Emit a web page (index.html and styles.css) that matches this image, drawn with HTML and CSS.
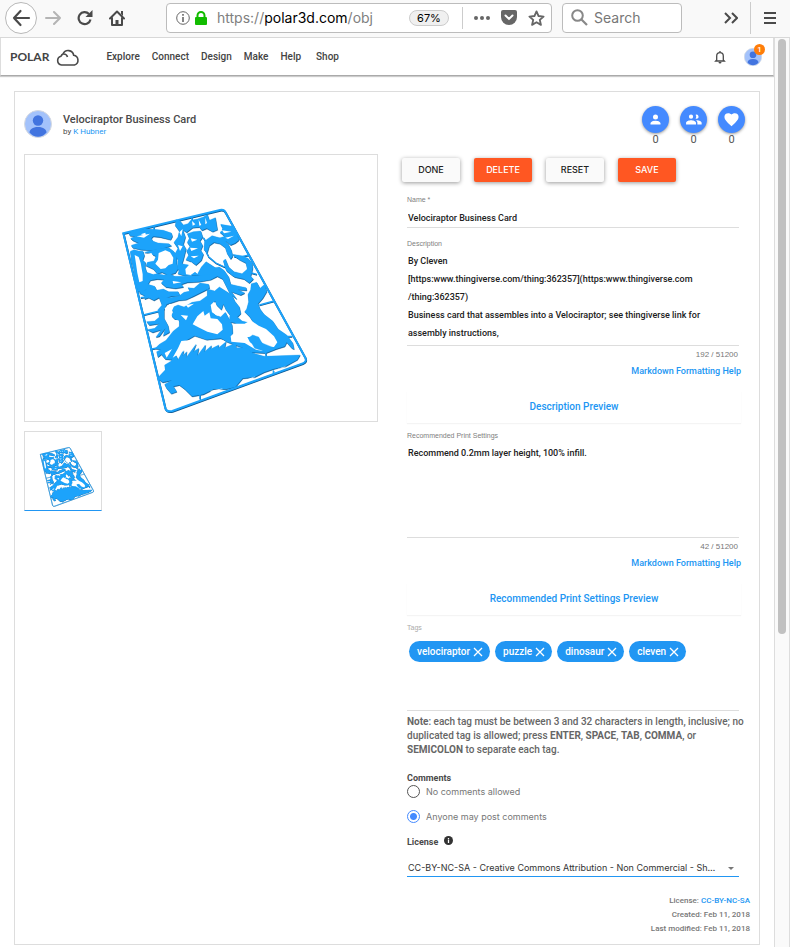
FILE: index.html
```html
<!DOCTYPE html>
<html lang="en">
<head>
<meta charset="utf-8">
<title>Velociraptor Business Card</title>
<link rel="stylesheet" href="styles.css">
</head>
<body>
<svg width="0" height="0" class="defs" aria-hidden="true">
  <symbol id="person" viewBox="0 0 24 24"><path d="M12 12a4 4 0 1 0 0-8 4 4 0 0 0 0 8zm0 2c-2.700 0-8 1.300-8 4v2h16v-2c0-2.700-5.300-4-8-4z"/></symbol>
  <symbol id="avatar" viewBox="0 0 28 28"><circle cx="14" cy="14" r="13.500" fill="#a3c2fb" stroke="#d5d9e0"/><circle cx="14" cy="10.500" r="5.200" fill="#4274df"/><path d="M5.500 22.500c0-3 3-5.500 8.500-5.500s8.500 2.500 8.500 5.500c-4.500 5.600-12.500 5.600-17 0z" fill="#4274df"/></symbol>
  <g id="outline">
    <path class="rail" d="M40 115 330 45q12-3 17 8l239 435q5 12-8 17L187 648q-17 4-21-8L40 115z"/>
    <path class="sprue" d="M132 92v16M246 66v20M336 104l24-5M100 360l48-12M92 308l40-6M125 462l20-4M448 330l44-12M380 188l38-8M146 550l42-22M270 596v16M420 232l20 6M520 424l26 0M466 470l4 20M490 526v12"/>
    <path d="M56 114 76 106 104 102 132 103 160 106 184 114 187 124 182 134 150 126 130 124 124 130 128 138 144 144 176 146 184 152 160 160 128 166 92 164 68 158 64 151 86 144 68 136 62 130 76 124 60 122z"/>
    <path d="M61 169 72 164 86 168 99 169 103 182 98 196 106 202 105 216 110 232 128 238 122 254 115 266 117 278 106 286 96 294 84 288 76 260 72 226 64 196z"/>
    <path d="M104 172 126 166 150 160 176 158 190 168 200 180 200 206 204 222 196 234 174 240 156 232 142 236 130 222 108 212 112 202 132 198 138 184 118 174z"/>
    <path d="M198 74 210 78 220 90 234 86 242 76 262 72 280 66 292 58 298 76 316 68 320 92 322 104 308 110 290 100 276 106 268 96 248 98 230 112 218 104 226 126 220 148 228 162 222 186 214 214 210 230 202 220 204 194 194 178 204 160 192 142 204 126 208 108 196 92z"/>
    <path d="M232 116 250 110 272 108 278 126 270 138 278 152 272 166 280 178 274 196 258 210 244 200 228 194 236 180 230 168 240 154 232 142 238 130z"/>
    <path d="M332 88 368 94 380 112 386 136 376 144 362 150 350 140 338 142 326 130 344 124 330 112 340 104z"/>
    <path class="bone" d="M280 128 290 144 286 164 294 182M294 184 318 204 344 216M372 184 404 190 420 210 408 234M343 196 348 220 368 240 406 246 424 254"/>
    <path d="M284 138 306 122 334 130 354 146 364 166 368 184 362 192 352 176 346 158 330 146 312 142 298 152 292 172 282 164z"/>
    <path d="M368 178 394 182 414 190 426 204 428 220 422 244 430 252 418 264 402 252 374 246 350 228 340 198 346 192 356 216 372 230 396 236 412 222 408 204 388 194z"/>
    <path d="M112 242 140 236 162 240 180 236 194 244 230 244 264 242 292 232 314 218 328 216 342 226 356 246 362 268 380 272 408 278 410 286 384 284 404 294 392 300 364 290 380 312 360 296 350 276 338 252 322 244 302 254 268 260 232 262 214 268 220 276 196 280 168 276 154 264 162 254 142 252 120 256z"/>
    <path d="M214 206 236 210 248 224 262 238 274 216 288 200 316 218 308 236 280 240 224 242 204 236z"/>
    <path d="M88 294 108 284 114 268 134 274 140 286 160 282 176 290 204 290 210 302 184 304 166 310 150 306 132 316 116 308 104 312 104 302z"/>
    <path d="M146 304 178 308 206 304 222 292 240 288 234 278 252 280 270 264 296 268 298 280 274 292 250 304 228 314 206 316 170 328 162 346 162 370 174 392 178 412 160 422 166 400 148 424 138 426 154 404 128 412 112 404 134 400 148 386 118 390 110 380 134 378 148 366 144 344 156 330z"/>
    <path d="M180 340 204 330 222 336 246 322 270 318 292 302 292 282 314 288 328 276 350 290 366 300 374 318 388 336 392 356 382 366 396 378 420 384 414 394 396 386 390 398 376 384 358 380 360 360 348 344 340 326 334 344 320 330 316 318 306 326 304 344 316 360 332 366 346 352 356 370 366 390 368 418 358 440 332 430 290 434 254 422 226 438 214 444 204 468 184 494 166 492 154 478 144 486 140 470 152 464 136 460 148 448 168 436 190 408 208 394 208 378 194 372 184 362 190 350z"/>
    <path d="M424 266 440 262 450 280 464 268 470 290 458 310 444 326 450 342 462 358 488 378 504 402 530 420 548 444 552 462 546 460 530 442 524 454 498 462 468 474 424 472 398 458 370 448 350 440 334 428 390 432 386 420 402 416 388 404 390 390 376 374 396 380 420 386 440 398 420 366 404 350 410 342 416 320 414 298 422 284z"/>
    <path d="M142 550 166 524 164 510 184 498 192 468 204 494 222 462 218 482 230 470 228 488 258 448 250 470 266 460 262 482 286 450 284 470 304 452 302 462 326 450 324 460 348 440 344 458 378 444 378 458 410 458 428 474 462 484 570 480 562 494 526 514 490 522 462 532 434 546 398 550 376 576 350 582 312 582 280 598 246 604 224 582 208 570 190 574 200 590 184 596 170 580 164 568 186 556 158 562z"/>
    <g class="gap">
      <path d="M74 180 86 186 92 204 98 238 98 258 88 262 82 234 78 206z"/>
      <path d="M146 174 166 166 180 172 190 188 188 206 176 210 166 220 152 222 136 206 144 194z"/>
      <path d="M108 178 124 174 130 184 120 196 104 194zM92 118l14-5 2 10zM132 130l14 2 6 4 14-1 8 5-18 2-22-4z"/>
      <path d="M80 124l40-8-18 12zM208 112l10-10-4 22zM204 150l14 4-8 14zM242 130l20 4-16 6zM240 158l24 2-20 8zM242 184l24-2-14 8zM246 78l10 10-8 4zM266 74l8 16-6 2zM286 68l5 16-5 4zM336 106l28 4-22 5zM346 128l26-6-18 10z"/>
      <path d="M226 222 244 202 262 226 242 240 228 238zM188 258l26 4-24 4z"/>
      <path d="M164 340 180 326 192 334 184 352 186 374 206 376 204 390 186 396 176 372z"/>
      <path d="M248 388 262 364 280 348 284 362 298 352 302 370 322 372 336 388 338 404 322 418 292 410 268 398z"/>
      <path d="M302 330 312 320 322 338 334 352 322 362 306 352zM212 360l22 2-6 14zM228 330l24-4-18 12z"/>
      <path d="M374 386 404 386 422 376 446 392 468 402 492 424 502 442 492 456 470 458 448 434 430 426 412 426 420 442 438 454 454 456 458 468 438 464 404 444 364 440 362 424 376 410z"/>
      <path d="M214 438 250 434 290 438 316 440 290 448 256 444 214 472 188 488 204 460zM164 474l22-12-16 26z"/>
      <path d="M392 560 436 544 416 556zM484 528 530 512 518 518zM300 588 340 580 310 592z"/>
    </g>
    <path d="M416 428 428 420 446 426 456 444 476 452 492 458 468 470 434 460z"/>
  </g>
  <symbol id="model" viewBox="0 0 630 675" overflow="visible">
    <use href="#outline" class="model-edge" x="1" y="2"/>
    <use href="#outline" class="model-face"/>
  </symbol>
</svg>

<div class="window">
  <header class="browser">
    <button class="tool back" aria-label="Back"><svg viewBox="0 0 32 32" width="32" height="32"><circle cx="16" cy="16" r="15.500" fill="#fff" stroke="#b8b8b8"/><path d="M24 16H9m6.500-7L9 16l6.500 7" fill="none" stroke="#4a4a4a" stroke-width="2.200" stroke-linecap="round" stroke-linejoin="round"/></svg></button>
    <button class="tool" aria-label="Forward"><svg viewBox="0 0 16 16" width="16" height="16"><path d="M1 8h14M9 2l6 6-6 6" fill="none" stroke="#b4b4b4" stroke-width="2" stroke-linecap="round" stroke-linejoin="round"/></svg></button>
    <button class="tool" aria-label="Reload"><svg viewBox="0 0 16 16" width="16" height="16"><path d="M13.500 9.500A6 6 0 1 1 12 4" fill="none" stroke="#4a4a4a" stroke-width="2.200"/><path d="M15.500 0v7h-7z" fill="#4a4a4a"/></svg></button>
    <button class="tool" aria-label="Home"><svg viewBox="0 0 16 16" width="16" height="16"><path d="M1 8.500 8 1.500l7 7M3 8v7h10V8" fill="none" stroke="#4a4a4a" stroke-width="2" stroke-linecap="round" stroke-linejoin="round"/><path d="M6.500 15v-5h3v5zM12 1h2v5l-2-2z" fill="#4a4a4a"/></svg></button>
    <div class="urlbar">
      <svg viewBox="0 0 14 14" width="14" height="14"><circle cx="7" cy="7" r="6.300" fill="none" stroke="#666"/><path d="M6.200 6h1.600v5H6.200zM6.200 3h1.600v1.700H6.200z" fill="#666"/></svg>
      <svg viewBox="0 0 12 14" width="12" height="14"><path d="M2.500 7V4.500a3.500 3.500 0 0 1 7 0V7" fill="none" stroke="#12bc00" stroke-width="2"/><rect y="6" width="12" height="8" rx="1" fill="#12bc00"/></svg>
      <div class="url" role="textbox" contenteditable="true" spellcheck="false" aria-label="Address">https://<b>polar3d.com</b>/obj</div>
      <button class="zoom">67%</button>
      <span class="rule"></span>
      <button class="tool" aria-label="Page actions"><svg viewBox="0 0 16 4" width="16" height="4" fill="#666"><circle cx="2" cy="2" r="2"/><circle cx="8" cy="2" r="2"/><circle cx="14" cy="2" r="2"/></svg></button>
      <button class="tool" aria-label="Pocket"><svg viewBox="0 0 16 15" width="16" height="15"><path d="M2 0h12a2 2 0 0 1 2 2v5a8 8 0 0 1-16 0V2a2 2 0 0 1 2-2z" fill="#666"/><path d="m4.500 5.500 3.500 3.400 3.500-3.400" fill="none" stroke="#fff" stroke-width="2" stroke-linecap="round"/></svg></button>
      <button class="tool" aria-label="Bookmark"><svg viewBox="0 0 18 17" width="17" height="16"><path d="m9 1.500 2.200 4.900 5.300.6-4 3.500 1.200 5.300L9 13l-4.700 2.800 1.200-5.300-4-3.500 5.300-.6z" fill="none" stroke="#666" stroke-width="2" stroke-linejoin="round"/></svg></button>
    </div>
    <label class="search">
      <svg viewBox="0 0 17 17" width="17" height="17"><circle cx="6.500" cy="6.500" r="5.300" fill="none" stroke="#888" stroke-width="2"/><path d="m10.500 10.500 5.500 5.500" stroke="#888" stroke-width="2.200"/></svg>
      <input type="search" placeholder="Search" aria-label="Search">
    </label>
    <button class="tool more" aria-label="More tools"><svg viewBox="0 0 14 12" width="14" height="12"><path d="m1 1 5 5-5 5M8 1l5 5-5 5" fill="none" stroke="#4a4a4a" stroke-width="2"/></svg></button>
    <span class="rule tall"></span>
    <button class="tool" aria-label="Menu"><svg viewBox="0 0 12 12" width="12" height="12"><path d="M0 1h12M0 6h12M0 11h12" stroke="#4a4a4a" stroke-width="2"/></svg></button>
  </header>

  <div class="viewport">
    <div class="page">
      <nav class="sitebar">
        <a href="#" class="logo"><span>POLAR</span><svg viewBox="0 0 24 18" width="24" height="18"><path d="M5.500 17A4.500 4.500 0 0 1 5 8.200 4.600 4.600 0 0 1 7 6a5.600 5.600 0 0 1 10.700 1.300A5 5 0 0 1 18.500 17zM7 6q3.500-.5 4.500 3" fill="none" stroke="#4a4a4a" stroke-width="1.600"/></svg></a>
        <a href="#">Explore</a><a href="#">Connect</a><a href="#">Design</a><a href="#">Make</a><a href="#">Help</a><a href="#" class="shop">Shop</a>
        <button class="tool bell" aria-label="Notifications"><svg viewBox="0 0 12 14" width="12" height="14"><path d="M2.700 10V6a3.300 3.300 0 0 1 6.600 0v4l1 1H1.700zM6 2.500V1" fill="none" stroke="#4a4a4a" stroke-width="1.300"/><path d="M4.500 12h3a1.500 1.500 0 0 1-3 0z" fill="#4a4a4a"/></svg></button>
        <button class="tool account" aria-label="Account"><svg width="18" height="18"><use href="#avatar"/></svg><span class="badge">1</span></button>
      </nav>

      <main class="card">
        <header class="title">
          <svg width="28" height="28"><use href="#avatar"/></svg>
          <div class="names"><h1>Velociraptor Business Card</h1><p>by <a href="#">K Hubner</a></p></div>
          <div class="stat"><button aria-label="Follow"><svg width="15" height="15"><use href="#person"/></svg></button>0</div>
          <div class="stat"><button aria-label="Collaborators"><svg viewBox="0 0 24 24" width="17" height="17"><path d="M16 11a3 3 0 1 0-1-5.800 5 5 0 0 1 0 5.600c.3.100.6.200 1 .200zM8.500 11a3 3 0 1 0 0-6 3 3 0 0 0 0 6zm0 2C6 13 1.500 14.200 1.500 16.500V19h14v-2.500c0-2.300-4.500-3.500-7-3.500zm8 0h-1c1.200.8 2 2 2 3.500V19h6v-2.500c0-2.300-4.500-3.500-7-3.500z"/></svg></button>0</div>
          <div class="stat"><button aria-label="Like"><svg viewBox="0 0 24 24" width="17" height="17"><path d="m12 21.400-1.500-1.300C5.400 15.400 2 12.300 2 8.500A5.500 5.500 0 0 1 7.500 3C9.200 3 10.900 3.800 12 5.100 13.100 3.800 14.800 3 16.500 3A5.500 5.500 0 0 1 22 8.500c0 3.800-3.400 6.900-8.500 11.600z"/></svg></button>0</div>
        </header>

        <div class="columns">
          <section class="gallery">
            <div class="preview"><svg viewBox="-255 -120 1056 798" role="img" aria-label="Velociraptor model"><use href="#model" width="630" height="675"/></svg></div>
            <button class="thumb" aria-label="Show model"><svg viewBox="-117 -114 781 801"><use href="#model" width="630" height="675"/></svg></button>
          </section>

          <form class="editor">
            <div class="actions"><button type="button">DONE</button><button type="button" class="hot">DELETE</button><button type="reset">RESET</button><button type="button" class="hot">SAVE</button></div>
            <div class="fields">
              <label class="caption" for="name">Name *</label>
              <input class="line" id="name" value="Velociraptor Business Card">
              <label class="caption" for="desc">Description</label>
              <textarea class="line" id="desc" rows="5" spellcheck="false">By Cleven
[https:www.thingiverse.com/thing:362357](https:www.thingiverse.com
/thing:362357)
Business card that assembles into a Velociraptor; see thingiverse link for assembly instructions,</textarea>
              <div class="count">192 / 51200</div>
              <a class="help" href="#">Markdown Formatting Help</a>
              <button type="button" class="wide">Description Preview</button>
              <label class="caption" for="print">Recommended Print Settings</label>
              <textarea class="line" id="print" rows="5" spellcheck="false">Recommend 0.2mm layer height, 100% infill.</textarea>
              <div class="count">42 / 51200</div>
              <a class="help" href="#">Markdown Formatting Help</a>
              <button type="button" class="wide">Recommended Print Settings Preview</button>
              <div class="caption pale">Tags</div>
              <div class="chips">
                <span class="chip">velociraptor<button type="button" aria-label="Remove velociraptor"><svg viewBox="0 0 10 10" width="10" height="10"><path d="m1 1 8 8M9 1 1 9"/></svg></button></span>
                <span class="chip">puzzle<button type="button" aria-label="Remove puzzle"><svg viewBox="0 0 10 10" width="10" height="10"><path d="m1 1 8 8M9 1 1 9"/></svg></button></span>
                <span class="chip">dinosaur<button type="button" aria-label="Remove dinosaur"><svg viewBox="0 0 10 10" width="10" height="10"><path d="m1 1 8 8M9 1 1 9"/></svg></button></span>
                <span class="chip">cleven<button type="button" aria-label="Remove cleven"><svg viewBox="0 0 10 10" width="10" height="10"><path d="m1 1 8 8M9 1 1 9"/></svg></button></span>
              </div>
              <p class="note"><b>Note</b>: each tag must be between 3 and 32 characters in length, inclusive; no duplicated tag is allowed; press <b>ENTER</b>, <b>SPACE</b>, <b>TAB</b>, <b>COMMA</b>, or <b>SEMICOLON</b> to separate each tag.</p>
              <fieldset>
                <legend>Comments</legend>
                <label class="choice"><input type="radio" name="comments">No comments allowed</label>
                <label class="choice"><input type="radio" name="comments" checked>Anyone may post comments</label>
              </fieldset>
              <label class="license" for="license">License <svg viewBox="0 0 10 10" width="9" height="9"><circle cx="5" cy="5" r="5" fill="#333"/><path d="M4.300 4.300h1.400v3.400H4.300zM4.300 2.200h1.400v1.300H4.300z" fill="#fff"/></svg></label>
              <div class="select">
                <select id="license"><option>CC-BY-NC-SA - Creative Commons Attribution - Non Commercial - Share Alike</option></select>
                <svg viewBox="0 0 6 3" width="6" height="3"><path d="M0 0h6L3 3z" fill="#777"/></svg>
              </div>
            </div>
          </form>
        </div>
        <footer class="meta"><p>License: <a href="#">CC-BY-NC-SA</a></p><p>Created: Feb 11, 2018</p><p>Last modified: Feb 11, 2018</p></footer>
      </main>
    </div>
    <div class="scrollbar"><div class="thumb-bar"></div></div>
  </div>
</div>
</body>
</html>
```
FILE: styles.css
```css
* { box-sizing: border-box; }
body, h1, p, fieldset { margin: 0; padding: 0; }
body { font: 500 10px/14px Roboto, sans-serif; color: #4a4a4a; background: #fff; }
button { padding: 0; border: 0; background: none; font: inherit; color: inherit; }
a { color: #2196f3; text-decoration: none; }
svg { display: block; flex: none; }
.defs { position: absolute; }

.window { display: flex; flex-direction: column; min-height: 100vh; }
.browser { display: flex; align-items: center; height: 38px; padding: 0 14px 2px 5px; background: #f9f9f9; border-bottom: 1px solid #d8d8d8; }
.tool { display: flex; align-items: center; justify-content: center; }
.browser > .tool + .tool { margin-left: 16px; }
.browser > .back + .tool { margin-left: 8px; }
.urlbar, .search { display: flex; align-items: center; height: 30px; background: #fff; border: 1px solid #bcbcbc; border-radius: 4px; }
.urlbar { flex: 1; min-width: 0; margin-left: 41px; padding: 0 6px 0 9px; gap: 5px; }
.url { flex: 1; min-width: 0; margin-left: 5px; overflow: hidden; white-space: nowrap; outline: none; font: 400 14px/20px Inter, sans-serif; color: #808080; }
.url b { font-weight: 400; color: #000; }
.zoom { width: 40px; height: 16px; margin-left: 25px; margin-right: 2px; border: 1px solid #ccc; border-radius: 8px; background: #f0f0f0; font: 400 11px/14px Inter, sans-serif; color: #000; }
.rule { width: 1px; height: 22px; margin: 0 6px; background: #ccc; }
.urlbar .tool + .tool { margin-left: 6px; }
.search { width: 120px; margin-left: 10px; padding: 0 8px; gap: 6px; }
.search input { width: 100%; min-width: 0; border: 0; outline: 0; padding: 0; background: none; font: 400 14px/20px Inter, sans-serif; }
.search input::placeholder { color: #777; }
.browser .more { margin-left: 42px; }
.rule.tall { height: 32px; margin: 0 13px 0 12px; }

.viewport { display: flex; flex: 1; }
.page { flex: 1; min-width: 0; padding-bottom: 2px; }
.sitebar { display: flex; align-items: center; height: 38px; padding: 0 11px 0 9px; border: 1px solid #ddd; border-width: 0 1px 1px; border-bottom-color: #aaa; box-shadow: 0 1px 1px #ccc; }
.sitebar a { margin-right: 12px; color: #444; }
.sitebar .logo { display: flex; align-items: center; gap: 7px; margin-right: 26px; }
.logo span { font: 700 12px/16px Lato, sans-serif; }
.sitebar .shop { margin-left: 3px; }
.bell { margin-left: auto; }
.account { position: relative; margin-left: 18px; }
.badge { position: absolute; top: -4px; right: -3px; width: 11px; height: 11px; border-radius: 50%; background: #ff7d0a; color: #fff; font-size: 8px; line-height: 11px; text-align: center; }

.card { margin: 15px 14px 0; padding: 0 9px 8px; border: 1px solid #ddd; }
.title { display: flex; align-items: center; height: 62px; padding: 2px 5px 0 0; }
.names { flex: 1; margin-left: 11px; padding-top: 2px; }
.names h1 { font-size: 11px; line-height: 14px; font-weight: 500; }
.names p { font-size: 8px; line-height: 10px; font-weight: 400; }
.stat { width: 27px; margin-left: 11px; padding-top: 5px; text-align: center; font: 400 11px/14px Roboto, sans-serif; color: #555; }
.stat button { display: flex; align-items: center; justify-content: center; width: 27px; height: 27px; border-radius: 50%; background: #448aff; box-shadow: 0 1px 3px #999; fill: #fff; }

.columns { display: grid; grid-template-columns: minmax(0, 354fr) minmax(0, 348fr); column-gap: 24px; }
.preview, .thumb { border: 1px solid #ddd; }
.preview svg { width: 100%; }
.thumb { display: block; width: 78px; margin-top: 9px; border-bottom-color: #2196f3; }
.model-edge { fill: #0b548c; stroke: #0b548c; }
.model-face { fill: #1ca3fb; stroke: #1ca3fb; }
.rail { fill: none; stroke-width: 6; }
.sprue, .bone { fill: none; stroke-width: 4; }
.gap { fill: #fff; stroke: none; }

.actions { display: flex; gap: 14px; padding-top: 4px; }
.actions button { width: 58px; height: 24px; border-radius: 2px; background: #fafafa; box-shadow: 0 1px 4px rgba(0,0,0,.4); font: 500 9px/24px Inter, sans-serif; color: #222; }
.actions .hot { background: #ff5722; color: #fff; }
.fields { padding: 0 11px 0 5px; }
.caption { display: block; margin-top: 11px; font: 400 7px/10px "Liberation Sans", sans-serif; color: #808080; }
.caption:first-child { margin-top: 13px; }
.line { display: block; width: 100%; margin-top: 3px; padding: 0 1px; border: 0; border-bottom: 1px solid #ddd; border-radius: 0; outline: 0; resize: none; overflow: hidden; background: none; font: 500 9px/18px Roboto, sans-serif; color: #212121; }
input.line { height: 20px; }
textarea.line { height: 94px; }
.count { margin: 4px 1px 0; text-align: right; font: 400 8px/10px "Liberation Sans", sans-serif; color: #777; }
.help { display: block; margin: 5px -2px 0 0; text-align: right; font-size: 9px; line-height: 12px; }
.wide { display: block; width: calc(100% + 2px); height: 32px; margin-top: 14px; box-shadow: 0 1px 1px #f4f4f4; color: #2196f3; font-size: 10px; }
.wide + .caption { margin-top: 8px; }
.pale { color: #aaa; }
.chips { display: flex; align-items: flex-start; gap: 5px; height: 70px; margin-top: 8px; padding-left: 2px; border-bottom: 1px solid #ddd; }
.chip { display: flex; align-items: center; height: 21px; padding: 0 7px 0 8px; gap: 3px; border-radius: 11px; background: #2196f3; color: #fff; font-size: 10px; }
.chip path { stroke: #fff; stroke-width: 1.300; }
.note { margin: 4px -8px 15px 0; font-size: 10px; color: #666; }
.note b { font-weight: 700; }
fieldset { border: 0; min-width: 0; }
legend { padding: 0; font-size: 9px; line-height: 13px; font-weight: 700; }
.choice { display: flex; align-items: center; gap: 6px; height: 13px; margin-bottom: 12px; font: 400 9px/13px Inter, sans-serif; color: #777; }
.choice input { appearance: none; width: 13px; height: 13px; margin: 0; border: 1px solid #555; border-radius: 50%; }
.choice input:checked { border-color: #448aff; background: radial-gradient(circle, #448aff 3px, transparent 4px); }
.license { display: flex; gap: 6px; margin-top: 1px; font-size: 9px; line-height: 13px; font-weight: 700; }
.select { display: flex; align-items: center; margin-top: 11px; padding: 0 5px 0 1px; border-bottom: 1px solid #2196f3; }
select { flex: 1; min-width: 0; height: 16px; margin-right: 8px; padding: 0; border: 0; outline: 0; appearance: none; background: none; text-overflow: ellipsis; overflow: hidden; white-space: nowrap; font: 400 9px/16px Inter, sans-serif; color: #333; }
.meta { margin-top: 17px; text-align: right; font-size: 8px; line-height: 14px; color: #777; }

.scrollbar { width: 16px; padding: 1px 3px 0; background: #fafafa; border: 1px solid #ddd; border-width: 0 1px; }
.thumb-bar { height: 595px; border-radius: 4px; background: #c1c1c1; }
```
